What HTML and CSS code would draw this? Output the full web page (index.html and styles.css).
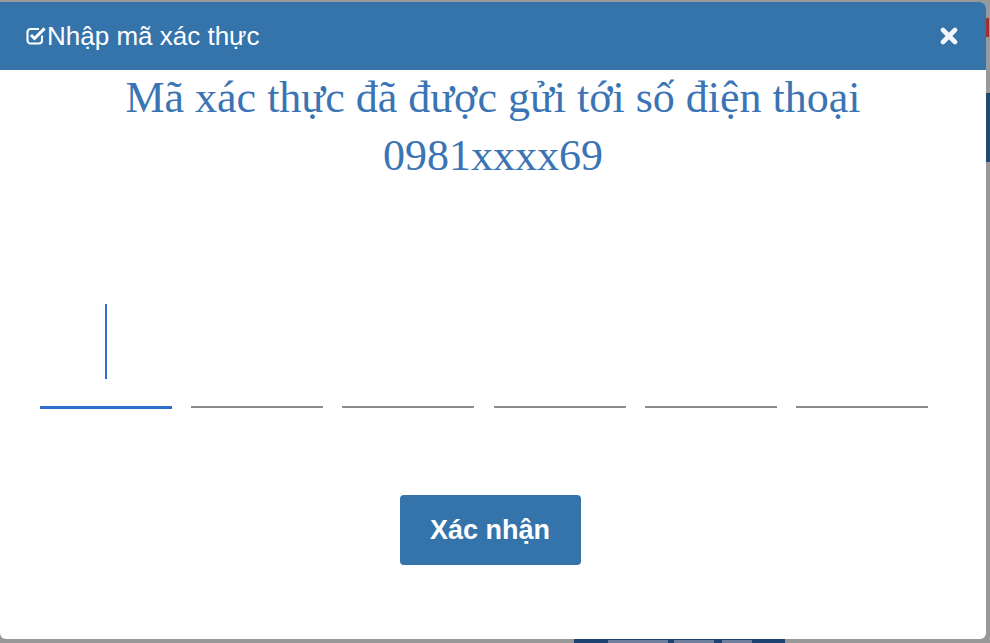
FILE: index.html
```html
<!DOCTYPE html>
<html lang="vi">
<head>
<meta charset="utf-8">
<title>Nhập mã xác thực</title>
<link rel="stylesheet" href="styles.css">
</head>
<body>
<div class="backdrop">
  <span class="bg-red"></span>
  <span class="bg-bar"></span>
  <span class="bg-button"><span class="bg-glyph g1"></span><span class="bg-glyph g2"></span><span class="bg-glyph g3"></span></span>
</div>
<div class="modal">
  <div class="modal-header">
    <div class="modal-title">
      <svg class="icon-check" viewBox="0 0 22 22" width="22" height="22" aria-hidden="true">
        <path d="M17 11.5v5a3 3 0 0 1-3 3H5.5a3 3 0 0 1-3-3V8a3 3 0 0 1 3-3h8.5" fill="none" stroke="#fff" stroke-width="2.1"/>
        <path d="M6 11l3.5 3.5L19.6 4.4" fill="none" stroke="#fff" stroke-width="3" stroke-linejoin="miter"/>
      </svg>
      <span>Nhập mã xác thực</span>
    </div>
    <svg class="icon-close" viewBox="0 0 18 18" width="18" height="18" aria-hidden="true">
      <path d="M3 3L15 15M15 3L3 15" stroke="#f2f6fa" stroke-width="4.6" stroke-linecap="round"/>
    </svg>
  </div>
  <div class="modal-body">
    <h2 class="message">Mã xác thực đã được gửi tới số điện thoại<br>0981xxxx69</h2>
    <div class="otp-row">
      <div class="otp-box active"><span class="caret"></span></div>
      <div class="otp-box"></div>
      <div class="otp-box"></div>
      <div class="otp-box"></div>
      <div class="otp-box"></div>
      <div class="otp-box"></div>
    </div>
    <div class="actions">
      <button class="btn-confirm" type="button">Xác nhận</button>
    </div>
  </div>
</div>
</body>
</html>
```
FILE: styles.css
```css
html, body {
  margin: 0;
  padding: 0;
}
body {
  width: 990px;
  height: 643px;
  background: #999999;
  overflow: hidden;
  position: relative;
  font-family: "Liberation Sans", Arial, sans-serif;
}
.backdrop {
  position: absolute;
  inset: 0;
}
.bg-red {
  position: absolute;
  left: 986px;
  top: 18px;
  width: 3px;
  height: 19px;
  background: #a3302c;
}
.bg-bar {
  position: absolute;
  left: 986px;
  top: 93px;
  width: 10px;
  height: 69px;
  background: #1f4a74;
}
.bg-button {
  position: absolute;
  left: 574px;
  top: 639px;
  width: 211px;
  height: 10px;
  background: #1f4474;
}
.bg-glyph {
  position: absolute;
  top: 1px;
  height: 3px;
  background: #6f819c;
}
.g1 { left: 34px; width: 60px; }
.g2 { left: 100px; width: 40px; }
.g3 { left: 148px; width: 30px; }
.modal {
  position: absolute;
  left: 0;
  top: 2px;
  width: 986px;
  height: 637px;
  background: #ffffff;
  border-radius: 0 6px 6px 6px;
  overflow: hidden;
}
.modal-header {
  height: 68px;
  background: #3574ab;
  display: flex;
  align-items: center;
  justify-content: space-between;
  padding: 0 28px 0 25px;
  color: #fff;
}
.modal-title {
  display: flex;
  align-items: center;
  font-size: 26px;
}
.icon-check {
  display: block;
  margin-right: 0;
  margin-top: -2px;
}
.icon-close {
  display: block;
}
.modal-body {
  display: flex;
  flex-direction: column;
}
.message {
  margin: -1px 0 0;
  font-family: "Liberation Serif", "Times New Roman", serif;
  font-weight: normal;
  font-size: 44px;
  line-height: 58px;
  color: #3a74b4;
  text-align: center;
}
.otp-row {
  display: flex;
  justify-content: space-between;
  width: 888px;
  margin: 119px 0 0 40px;
}
.otp-box {
  width: 132px;
  height: 104px;
  border-bottom: 2px solid #8c8c8c;
  box-sizing: border-box;
  display: flex;
  justify-content: center;
  align-items: flex-start;
  padding-top: 0;
}
.otp-box.active {
  border-bottom: 3px solid #2f6fcb;
  height: 105px;
}
.caret {
  display: block;
  width: 2px;
  height: 75px;
  background: #2f6fcb;
}
.actions {
  display: flex;
  justify-content: center;
  margin-top: 86px;
}
.btn-confirm {
  width: 181px;
  height: 70px;
  border: none;
  border-radius: 4px;
  background: #3574ab;
  color: #fff;
  font-family: "Liberation Sans", Arial, sans-serif;
  font-weight: bold;
  font-size: 27px;
  padding: 0;
  margin-right: 6px;
}
```
